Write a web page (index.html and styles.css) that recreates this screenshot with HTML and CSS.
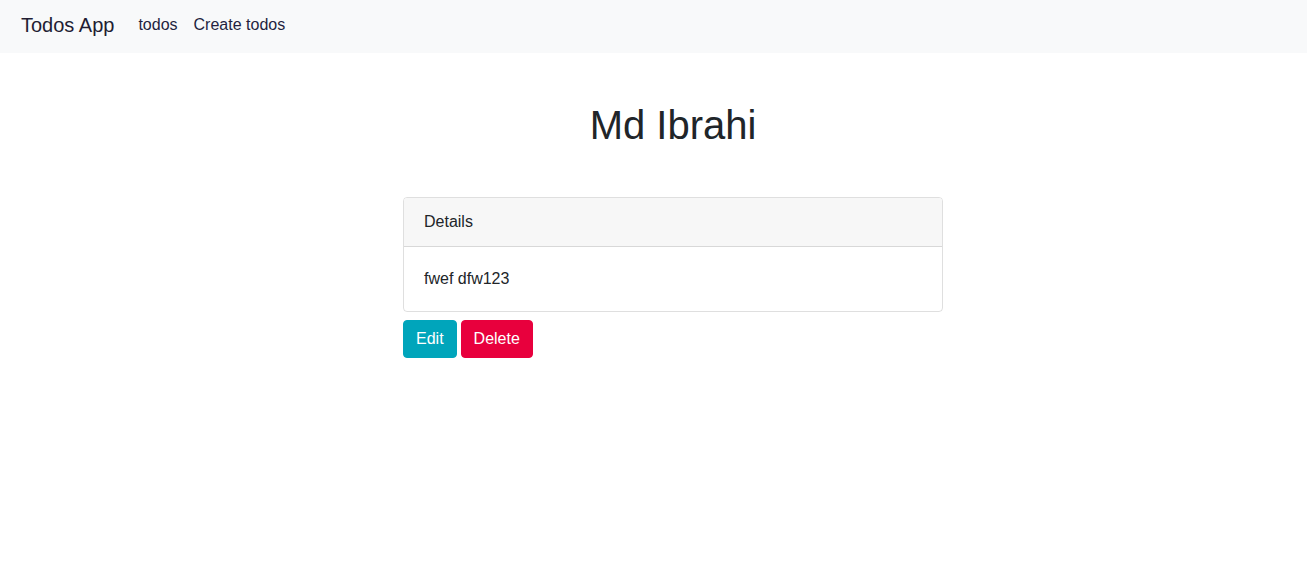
FILE: index.html
```html
<!DOCTYPE html>
<html lang="en">
<head>
<meta charset="utf-8">
<title>Todos App</title>
<link rel="stylesheet" href="styles.css">
</head>
<body>
<nav class="navbar">
  <a class="brand" href="#">Todos App</a>
  <ul class="nav">
    <li><a class="nav-link" href="#">todos</a></li>
    <li><a class="nav-link" href="#">Create todos</a></li>
  </ul>
</nav>
<main class="page">
  <div class="content">
    <h1 class="title">Md Ibrahi</h1>
    <div class="card">
      <div class="card-header">Details</div>
      <div class="card-body">fwef dfw123</div>
    </div>
    <div class="actions">
      <button class="btn btn-edit">Edit</button>
      <button class="btn btn-delete">Delete</button>
    </div>
  </div>
</main>
</body>
</html>
```

FILE: styles.css
```css
* { box-sizing: border-box; }
body {
  margin: 0;
  font-family: "Liberation Sans", Arial, sans-serif;
  font-size: 16px;
  line-height: 1.5;
  color: #212529;
  background: #fff;
}
.navbar {
  display: flex;
  align-items: center;
  height: 53px;
  padding: 10px 21px 13px;
  background: #f8f9fa;
}
.brand {
  font-size: 20px;
  line-height: 30px;
  color: #221d33;
  text-decoration: none;
  margin-right: 16px;
}
.nav {
  display: flex;
  align-items: center;
  list-style: none;
  margin: 0;
  padding: 0;
}
.nav-link {
  display: block;
  padding: 0 8px;
  color: #231f40;
  text-decoration: none;
  line-height: 24px;
}
.page {
  display: flex;
  justify-content: center;
  padding-left: 39px;
}
.content {
  width: 540px;
}
.title {
  margin: 0;
  padding-top: 48px;
  text-align: center;
  font-size: 40px;
  font-weight: 500;
  line-height: 48px;
  color: #212529;
  margin-bottom: 48px;
}
.card {
  border: 1px solid rgba(0,0,0,.125);
  border-radius: 4px;
  overflow: hidden;
}
.card-header {
  padding: 12px 20px;
  background: #f7f7f7;
  border-bottom: 1px solid rgba(0,0,0,.125);
}
.card-body {
  padding: 20px;
}
.actions {
  display: flex;
  gap: 4px;
  margin-top: 8px;
}
.btn {
  font-family: inherit;
  font-size: 16px;
  line-height: 24px;
  padding: 6px 12px;
  border: 1px solid transparent;
  border-radius: 4px;
  color: #fff;
  cursor: pointer;
}
.btn-edit { background: #00a5bb; border-color: #00a5bb; }
.btn-delete { background: #e8003d; border-color: #e8003d; }
```
